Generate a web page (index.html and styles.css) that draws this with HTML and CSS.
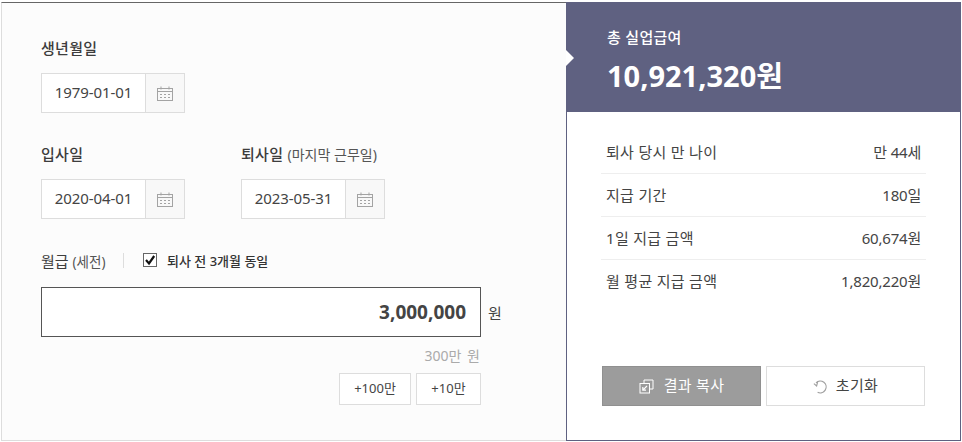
FILE: index.html
```html
<!DOCTYPE html>
<html lang="ko">
<head>
<meta charset="utf-8">
<title>실업급여 계산</title>
<link rel="stylesheet" href="styles.css">
</head>
<body>
<main class="calc">
  <section class="form">
    <div class="field">
      <div class="label">생년월일</div>
      <div class="date">
        <span class="date-val">1979-01-01</span>
        <span class="date-btn"><svg class="cal" viewBox="0 0 16 15"><use href="#cal"/></svg></span>
      </div>
    </div>
    <div class="row-two">
      <div class="field">
        <div class="label">입사일</div>
        <div class="date">
          <span class="date-val">2020-04-01</span>
          <span class="date-btn"><svg class="cal" viewBox="0 0 16 15"><use href="#cal"/></svg></span>
        </div>
      </div>
      <div class="field">
        <div class="label">퇴사일 <small>(마지막 근무일)</small></div>
        <div class="date">
          <span class="date-val">2023-05-31</span>
          <span class="date-btn"><svg class="cal" viewBox="0 0 16 15"><use href="#cal"/></svg></span>
        </div>
      </div>
    </div>
    <div class="salary-head">
      <span class="salary-label">월급 <small>(세전)</small></span>
      <span class="sep"></span>
      <span class="check"><svg viewBox="0 0 14 14"><rect x=".5" y=".5" width="13" height="13" fill="#fff" stroke="#666"/><path d="M3 7l3 3.4L11.2 3" fill="none" stroke="#111" stroke-width="2.2"/></svg></span>
      <span class="check-text">퇴사 전 3개월 동일</span>
    </div>
    <div class="salary-line">
      <div class="salary-input">3,000,000</div>
      <span class="unit">원</span>
    </div>
    <div class="hint">300만 원</div>
    <div class="adds">
      <span class="add add-a">+100만</span>
      <span class="add add-b">+10만</span>
    </div>
  </section>
  <section class="result">
    <header class="total">
      <div class="total-label">총 실업급여</div>
      <div class="total-val">10,921,320원</div>
    </header>
    <div class="details">
      <div class="line"><span class="line-key">퇴사 당시 만 나이</span><span class="line-val">만 44세</span></div>
      <div class="line"><span class="line-key">지급 기간</span><span class="line-val">180일</span></div>
      <div class="line"><span class="line-key">1일 지급 금액</span><span class="line-val">60,674원</span></div>
      <div class="line"><span class="line-key">월 평균 지급 금액</span><span class="line-val">1,820,220원</span></div>
    </div>
    <div class="actions">
      <span class="btn btn-copy">
        <svg class="ico" viewBox="0 0 15 15" fill="none" stroke="#fff"><path d="M5 4.5V1h9v9h-3.5"/><rect x="1" y="4.5" width="9.5" height="9.5"/><path d="M8 7L3.8 11.2M3.8 8v3.2H7" stroke-width="1.2"/></svg>
        <span class="btn-text">결과 복사</span>
      </span>
      <span class="btn btn-reset">
        <svg class="ico" viewBox="0 0 15 15" fill="none" stroke="#a0a0a0" stroke-width="1.2"><path d="M3 3.8A5.9 5.9 0 1 1 4.6 13.2"/><path d="M.9 4.6L3.6 7 4.6 3.2"/></svg>
        <span class="btn-text">초기화</span>
      </span>
    </div>
  </section>
</main>
<svg class="defs" aria-hidden="true"><defs><g id="cal" fill="none" stroke="#a3a3a3"><rect x=".5" y="2.5" width="15" height="12"/><path d="M.5 5.5h15M4 .5v3M12 .5v3"/><path d="M3 8.5h2M7 8.5h2M11 8.5h2M3 11.5h2M7 11.5h2M11 11.5h2" stroke-width="1"/></g></defs></svg>
</body>
</html>
```
FILE: styles.css
```css
* { box-sizing: border-box; }
html, body { margin: 0; padding: 0; background: #fff; }
body {
  font-family: "Noto Sans", "Noto Sans CJK KR", sans-serif;
  color: #444;
  font-size: 15px;
  width: 962px;
  height: 442px;
  overflow: hidden;
}
.defs { width: 0; height: 0; position: absolute; }
.calc {
  display: flex;
  margin: 2px 0 0 1px;
  width: 960px;
  height: 439px;
}
.form {
  width: 565px;
  background: #fcfcfc;
  border-top: 1px solid #666;
  border-left: 1px solid #ddd;
  border-bottom: 1px solid #ddd;
  padding: 34px 0 0 39px;
}
.label {
  font-size: 15px;
  font-weight: 500;
  letter-spacing: .3px;
  line-height: 22px;
  height: 22px;
  margin-bottom: 14px;
  color: #3d3d3d;
}
.label small, .salary-label small {
  font-size: 14px;
  font-weight: 400;
  letter-spacing: 0;
  color: #555;
}
.date {
  display: flex;
  width: 144px;
  height: 40px;
  border: 1px solid #ddd;
  background: #fff;
}
.date-val {
  width: 103px;
  text-align: center;
  line-height: 37px;
  font-size: 15px;
  letter-spacing: -.1px;
  color: #444;
}
.date-btn {
  flex: 1;
  border-left: 1px solid #ddd;
  background: #f8f8f8;
  display: flex;
  align-items: center;
  justify-content: center;
}
.cal { width: 16px; height: 15px; display: block; }
.row-two {
  display: flex;
  gap: 56px;
  margin-top: 30px;
}
.salary-head {
  display: flex;
  align-items: center;
  height: 20px;
  margin-top: 31px;
}
.salary-label {
  font-size: 15px;
  font-weight: 400;
  color: #3d3d3d;
  width: 82px;
}
.salary-label small { font-size: 13.5px; }
.sep { width: 1px; height: 15px; background: #ddd; }
.check { width: 14px; height: 14px; margin-left: 19px; }
.check svg { display: block; width: 14px; height: 14px; }
.check-text {
  margin-left: 10px;
  font-size: 13px;
  font-weight: 500;
  color: #333;
}
.salary-line {
  display: flex;
  align-items: center;
  margin-top: 17px;
}
.salary-input {
  width: 440px;
  height: 50px;
  border: 1px solid #555;
  background: #fff;
  text-align: right;
  padding-right: 14px;
  font-size: 19px;
  font-weight: 700;
  line-height: 49px;
  color: #444;
}
.unit { margin-left: 7px; font-size: 15px; color: #444; }
.hint {
  width: 439px;
  text-align: right;
  font-size: 14px;
  word-spacing: 2px;
  line-height: 20px;
  color: #aaa;
  margin-top: 9px;
}
.adds {
  width: 440px;
  display: flex;
  justify-content: flex-end;
  gap: 5px;
  margin-top: 7px;
}
.add {
  height: 32px;
  border: 1px solid #ddd;
  font-size: 13px;
  line-height: 29px;
  text-align: center;
  color: #444;
  background: #fff;
}
.add-a { width: 72px; }
.add-b { width: 65px; }
.result {
  width: 395px;
  background: #fff;
  border: 1px solid #5f6181;
  border-top: 0;
  display: flex;
  flex-direction: column;
  position: relative;
}
.total {
  background: #5f6181;
  height: 110px;
  margin: 0 -1px;
  padding: 24px 0 0 41px;
  color: #fff;
  position: relative;
}
.total::before {
  content: "";
  position: absolute;
  left: 0;
  top: 48px;
  border-left: 8px solid #fff;
  border-top: 8px solid transparent;
  border-bottom: 8px solid transparent;
}
.total-label { font-size: 15px; font-weight: 500; letter-spacing: .3px; line-height: 22px; }
.total-val { font-size: 29px; font-weight: 700; line-height: 40px; margin-top: 8px; }
.details {
  margin: 19px 34px 0 34px;
}
.line {
  display: flex;
  justify-content: space-between;
  height: 43px;
  padding: 0 5px;
  line-height: 43px;
  font-size: 15px;
  color: #444;
  border-bottom: 1px solid #eee;
}
.line:last-child { border-bottom: 0; }
.line-key { letter-spacing: .3px; }
.line-val { letter-spacing: -.2px; }
.actions {
  display: flex;
  gap: 5px;
  margin: 63px 0 0 35px;
}
.btn {
  width: 159px;
  height: 40px;
  display: flex;
  align-items: center;
  justify-content: center;
  gap: 10px;
  font-size: 15px;
  letter-spacing: .3px;
}
.btn-text { padding-bottom: 3px; }
.btn-copy { background: #9c9c9c; border: 1px solid #909090; color: #fff; }
.btn-reset { background: #fff; border: 1px solid #ddd; color: #444; gap: 8px; }
.ico { width: 15px; height: 15px; display: block; }
```
